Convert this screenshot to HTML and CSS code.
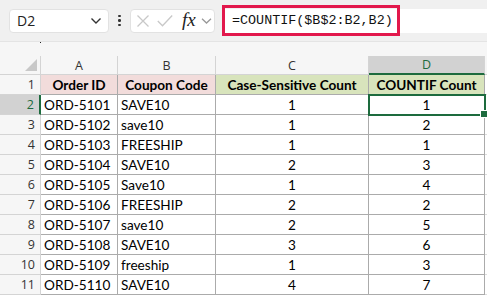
FILE: index.html
```html
<!DOCTYPE html>
<html lang="en">
<head>
  <meta charset="UTF-8">
  <title>COUNTIF Count</title>
  <link rel="stylesheet" href="styles.css">
</head>
<body>
  <div class="formula-bar">
    <div class="name-box">
      <span>D2</span>
      <svg class="chev" width="12" height="8" viewBox="0 0 12 8"><path d="M1.5 1.5 L6 6 L10.5 1.5" fill="none" stroke="#333" stroke-width="1.4"/></svg>
    </div>
    <div class="dots"><i></i><i></i><i></i></div>
    <div class="fx-box">
      <svg class="cancel" width="14" height="14" viewBox="0 0 14 14"><path d="M1.5 1.5 L12.5 12.5 M12.5 1.5 L1.5 12.5" stroke="#c8c8c8" stroke-width="1.3"/></svg>
      <svg class="enter" width="16" height="14" viewBox="0 0 16 14"><path d="M0.8 7 L5.5 11.8 L15.2 1.5" fill="none" stroke="#c8c8c8" stroke-width="1.3"/></svg>
      <span class="fx">fx</span>
      <svg class="chev" width="11" height="8" viewBox="0 0 11 8"><path d="M1 1.8 L5.5 6 L10 1.8" fill="none" stroke="#999" stroke-width="1.3"/></svg>
    </div>
    <div class="formula-input">
      <span class="formula">=COUNTIF($B$2:B2,B2)</span>
      <div class="highlight"></div>
    </div>
  </div>
  <div class="band"><span class="dot"></span></div>

  <div class="sheet">
    <div class="corner"><span class="tri"></span></div>
    <div class="col-head">A</div>
    <div class="col-head">B</div>
    <div class="col-head">C</div>
    <div class="col-head active">D</div>
    <div class="col-head pad"></div>

    <div class="row-head">1</div>
    <div class="cell th pink">Order ID</div>
    <div class="cell th pink">Coupon Code</div>
    <div class="cell th green">Case-Sensitive Count</div>
    <div class="cell th green">COUNTIF Count</div>
    <div class="cell blank"></div>

    <div class="row-head active">2</div>
    <div class="cell">ORD-5101</div>
    <div class="cell">SAVE10</div>
    <div class="cell num">1</div>
    <div class="cell num selected">1<span class="handle"></span></div>
    <div class="cell blank"></div>

    <div class="row-head">3</div>
    <div class="cell">ORD-5102</div>
    <div class="cell">save10</div>
    <div class="cell num">1</div>
    <div class="cell num">2</div>
    <div class="cell blank"></div>

    <div class="row-head">4</div>
    <div class="cell">ORD-5103</div>
    <div class="cell">FREESHIP</div>
    <div class="cell num">1</div>
    <div class="cell num">1</div>
    <div class="cell blank"></div>

    <div class="row-head">5</div>
    <div class="cell">ORD-5104</div>
    <div class="cell">SAVE10</div>
    <div class="cell num">2</div>
    <div class="cell num">3</div>
    <div class="cell blank"></div>

    <div class="row-head">6</div>
    <div class="cell">ORD-5105</div>
    <div class="cell">Save10</div>
    <div class="cell num">1</div>
    <div class="cell num">4</div>
    <div class="cell blank"></div>

    <div class="row-head">7</div>
    <div class="cell">ORD-5106</div>
    <div class="cell">FREESHIP</div>
    <div class="cell num">2</div>
    <div class="cell num">2</div>
    <div class="cell blank"></div>

    <div class="row-head">8</div>
    <div class="cell">ORD-5107</div>
    <div class="cell">save10</div>
    <div class="cell num">2</div>
    <div class="cell num">5</div>
    <div class="cell blank"></div>

    <div class="row-head">9</div>
    <div class="cell">ORD-5108</div>
    <div class="cell">SAVE10</div>
    <div class="cell num">3</div>
    <div class="cell num">6</div>
    <div class="cell blank"></div>

    <div class="row-head">10</div>
    <div class="cell">ORD-5109</div>
    <div class="cell">freeship</div>
    <div class="cell num">1</div>
    <div class="cell num">3</div>
    <div class="cell blank"></div>

    <div class="row-head">11</div>
    <div class="cell">ORD-5110</div>
    <div class="cell">SAVE10</div>
    <div class="cell num">4</div>
    <div class="cell num">7</div>
    <div class="cell blank"></div>
  </div>
</body>
</html>
```

FILE: styles.css
```css
body {
  margin: 0;
  font-family: 'Lato', 'Liberation Sans', sans-serif;
  background: #ffffff;
  color: #000;
  overflow: hidden;
}

/* formula bar */
.formula-bar {
  height: 41px;
  background: #f0f0f0;
  display: flex;
  align-items: center;
  padding-left: 9px;
  box-sizing: border-box;
}

.name-box {
  width: 100px;
  height: 24px;
  box-sizing: border-box;
  background: #fff;
  border: 1px solid #e2e2e2;
  border-radius: 4px;
  display: flex;
  align-items: center;
  justify-content: space-between;
  padding: 0 6px 0 7px;
  font-family: 'Open Sans', sans-serif;
  font-size: 14px;
  color: #222;
}

.dots {
  width: 21px;
  display: flex;
  flex-direction: column;
  align-items: center;
  gap: 2px;
}

.dots i {
  width: 2.5px;
  height: 2.5px;
  background: #333;
  border-radius: 50%;
}

.fx-box {
  width: 85px;
  height: 24px;
  box-sizing: border-box;
  background: #fff;
  border: 1px solid #e2e2e2;
  border-radius: 4px;
  display: flex;
  align-items: center;
  padding-left: 5px;
}

.enter {
  margin-left: 7px;
}

.fx {
  font-family: 'Liberation Serif', serif;
  font-style: italic;
  font-size: 19px;
  line-height: 1;
  color: #222;
  margin-left: 9px;
  margin-bottom: 2px;
}

.fx-box .chev {
  margin-left: 5px;
}

.formula-input {
  position: relative;
  margin-left: 7px;
  flex: 1;
  height: 24px;
  background: #fff;
  display: flex;
  align-items: center;
  padding-left: 10px;
}

.formula {
  font-family: 'Liberation Mono', monospace;
  font-size: 13.4px;
  color: #111;
}

.highlight {
  position: absolute;
  left: 0;
  top: -4px;
  width: 178px;
  height: 31px;
  box-sizing: border-box;
  border: 3px solid #e2184c;
}

.band {
  height: 15px;
  background: #f6f6f6;
  border-top: 1px solid #e4e4e4;
  box-sizing: border-box;
  position: relative;
}

.dot {
  position: absolute;
  left: 40px;
  top: 0;
  width: 1px;
  height: 1px;
  background: #222;
}

/* sheet grid */
.sheet {
  display: grid;
  grid-template-columns: 41px 77px 98px 153px 116px 2px;
  grid-template-rows: 19px repeat(11, 20px);
  font-size: 13.6px;
}

.corner {
  background: #f6f6f6;
  border-right: 1px solid #d4d4d4;
  border-bottom: 1px solid #d4d4d4;
  position: relative;
}

.tri {
  position: absolute;
  right: 3px;
  bottom: 3px;
  width: 0;
  height: 0;
  border-left: 12px solid transparent;
  border-bottom: 12px solid #c8c8c8;
}

.col-head {
  background: #f6f6f6;
  border-right: 1px solid #d4d4d4;
  border-bottom: 1px solid #d4d4d4;
  display: flex;
  align-items: center;
  justify-content: center;
  color: #333;
  font-family: 'Open Sans', sans-serif;
  font-size: 12.5px;
}

.col-head.active {
  background: #d2d2d2;
  color: #1d6b3e;
  border-bottom: 2px solid #1d6b3e;
}

.col-head.pad {
  border-right: none;
}

.row-head {
  background: #f6f6f6;
  border-right: 1px solid #d4d4d4;
  border-bottom: 1px solid #d4d4d4;
  display: flex;
  align-items: center;
  justify-content: flex-end;
  padding-right: 5px;
  color: #333;
  font-family: 'Open Sans', sans-serif;
  font-size: 12.5px;
}

.row-head.active {
  background: #d2d2d2;
  color: #1d6b3e;
  border-right: 2px solid #1d6b3e;
}

.cell {
  border-right: 1px solid #ababab;
  border-bottom: 1px solid #ababab;
  display: flex;
  align-items: center;
  padding-left: 3px;
  white-space: nowrap;
  overflow: hidden;
  position: relative;
}

.cell.blank {
  border-right: none;
  border-bottom-color: #dcdcdc;
}

.cell.th {
  font-weight: bold;
  justify-content: center;
  padding-left: 0;
}

.pink {
  background: #f2dcdb;
}

.green {
  background: #d8e4bc;
}

.cell.num {
  justify-content: center;
  padding-left: 0;
}

.cell.selected {
  overflow: visible;
  outline: 2px solid #1d6b3e;
  outline-offset: -1px;
  z-index: 1;
}

.handle {
  position: absolute;
  right: -4px;
  bottom: -4px;
  width: 6px;
  height: 6px;
  background: #1d6b3e;
  border: 1px solid #fff;
}
```
